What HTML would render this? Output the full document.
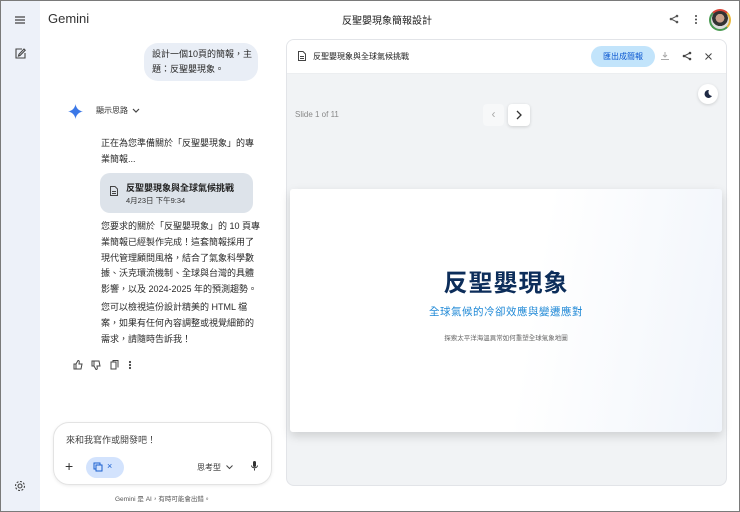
<!DOCTYPE html>
<html><head><meta charset="utf-8"><style>
*{margin:0;padding:0;box-sizing:border-box}
body{width:740px;height:512px;overflow:hidden;font-family:"Liberation Sans","Noto Sans CJK TC",sans-serif;background:#fff;position:relative;color:#1f1f1f}
.frame{position:absolute;inset:0;border:1px solid #7a7a7a;pointer-events:none;z-index:10}
.side{position:absolute;left:0;top:0;width:40px;height:512px;background:#edf1f9}
.abs{position:absolute}
.t{font-size:9px;line-height:15.8px;color:#2a2a2a}
</style></head><body>
<div class="frame"></div>
<div class="side"></div>
<svg class="abs" style="left:15px;top:16px" width="10" height="8"><path d="M0 1h10M0 4h10M0 7h10" stroke="#444" stroke-width="1.2"/></svg>
<svg class="abs" style="left:15px;top:48px" width="11" height="11"><path d="M9 1l1.2 1.2L5 7.5 3.5 8 4 6.3z M7 1H1v9h9V5" stroke="#444" fill="none" stroke-width="1.1"/></svg>
<svg class="abs" style="left:14px;top:480px" width="12" height="12"><circle cx="6" cy="6" r="2" fill="none" stroke="#444" stroke-width="1.1"/><circle cx="6" cy="6" r="4.5" fill="none" stroke="#444" stroke-width="1.1" stroke-dasharray="2 1.5"/></svg>

<div class="abs" style="left:48px;top:11px;font-size:13px;color:#333">Gemini</div>
<div class="abs" style="left:342px;top:12px;font-size:10px;color:#222">反聖嬰現象簡報設計</div>
<svg class="abs" style="left:669px;top:14px" width="10" height="10"><circle cx="8" cy="2" r="1.3" fill="#555"/><circle cx="2" cy="5" r="1.3" fill="#555"/><circle cx="8" cy="8" r="1.3" fill="#555"/><path d="M8 2L2 5l6 3" stroke="#555" fill="none"/></svg>
<svg class="abs" style="left:694px;top:14px" width="4" height="11"><circle cx="2" cy="2" r="1" fill="#444"/><circle cx="2" cy="5.5" r="1" fill="#444"/><circle cx="2" cy="9" r="1" fill="#444"/></svg>
<div class="abs" style="left:709px;top:9px;width:22px;height:22px;border-radius:50%;border:2px solid #4a9a52;border-top-color:#d94436;border-right-color:#e9b93a;background:radial-gradient(circle at 50% 40%,#c9a08a 0 30%,#333 32% 55%,#ddd 57%)"></div>

<div class="abs t" style="left:144px;top:43px;width:114px;height:38px;background:#e9eef6;border-radius:14px;padding:4px 5px 4px 8px;font-size:9px;line-height:15px;white-space:nowrap">設計一個10頁的簡報，主<br>題：反聖嬰現象。</div>

<svg class="abs" style="left:68px;top:104px" width="15" height="15"><path d="M7.5 0C8 4 11 7 15 7.5 11 8 8 11 7.5 15 7 11 4 8 0 7.5 4 7 7 4 7.5 0z" fill="#3b78e7"/></svg>
<div class="abs" style="left:96px;top:105px;font-size:8px;color:#333">顯示思路</div>
<svg class="abs" style="left:132px;top:108px" width="8" height="6"><path d="M1 1l3 3 3-3" stroke="#444" fill="none" stroke-width="1.2"/></svg>

<div class="abs t" style="left:101px;top:136px;width:160px;white-space:nowrap">正在為您準備關於「反聖嬰現象」的專<br>業簡報...</div>
<div class="abs" style="left:100px;top:173px;width:153px;height:40px;background:#dde3ea;border-radius:10px"></div>
<svg class="abs" style="left:110px;top:186px" width="8" height="10"><path d="M.5.5h4.5l2.5 2.5v6.5h-7z M2 5.5h4M2 7.5h4" stroke="#444" fill="none" stroke-width="1"/></svg>
<div class="abs" style="left:126px;top:181px;font-size:9px;font-weight:bold;color:#222">反聖嬰現象與全球氣候挑戰</div>
<div class="abs" style="left:126px;top:195px;font-size:7.5px;color:#333">4月23日 下午9:34</div>

<div class="abs t" style="left:101px;top:219px;width:170px;white-space:nowrap">您要求的關於「反聖嬰現象」的 10 頁專<br>業簡報已經製作完成！這套簡報採用了<br>現代管理顧問風格，結合了氣象科學數<br>據、沃克環流機制、全球與台灣的具體<br>影響，以及 2024-2025 年的預測趨勢。</div>
<div class="abs t" style="left:101px;top:300px;width:170px;white-space:nowrap">您可以檢視這份設計精美的 HTML 檔<br>案，如果有任何內容調整或視覺細節的<br>需求，請隨時告訴我！</div>

<svg class="abs" style="left:73px;top:360px" width="65" height="10" fill="none" stroke="#444" stroke-width="1"><path d="M1 4h2v5H1z M3 4l2-3.5c1 0 1.5.5 1.2 2L6 4h3l-1 5H3"/><path d="M19 6h2V1h-2z M21 6l2 3.5c1 0 1.5-.5 1.2-2L24 6h3l-1-5H21"/><path d="M38 2h5v7h-5z M40 2V.5h5v7"/><circle cx="57" cy="2" r=".6" fill="#444"/><circle cx="57" cy="5" r=".6" fill="#444"/><circle cx="57" cy="8" r=".6" fill="#444"/></svg>

<div class="abs" style="left:53px;top:422px;width:219px;height:63px;border:1px solid #e3e3e3;border-radius:16px;box-shadow:0 1px 3px rgba(0,0,0,.08)"></div>
<div class="abs" style="left:66px;top:433px;font-size:9px;color:#444">來和我寫作或開發吧！</div>
<div class="abs" style="left:65px;top:459px;font-size:14px;color:#333;line-height:14px">+</div>
<div class="abs" style="left:86px;top:457px;width:38px;height:21px;background:#d3e3fd;border-radius:11px"></div>
<svg class="abs" style="left:93px;top:462px" width="10" height="10"><rect x="1" y="1" width="6" height="6" stroke="#1a5fd0" fill="none"/><rect x="3" y="3" width="6" height="6" stroke="#1a5fd0" fill="#d3e3fd"/></svg>
<div class="abs" style="left:107px;top:461px;font-size:9px;color:#1a5fd0">×</div>
<div class="abs" style="left:197px;top:462px;font-size:8px;color:#333">思考型</div>
<svg class="abs" style="left:226px;top:465px" width="7" height="5"><path d="M.5.5l3 3 3-3" stroke="#444" fill="none"/></svg>
<svg class="abs" style="left:251px;top:461px" width="7" height="10"><rect x="2" y="0" width="3" height="6" rx="1.5" fill="#333"/><path d="M.5 4.5c0 3 6 3 6 0M3.5 7.5v2" stroke="#333" fill="none"/></svg>
<div class="abs" style="left:115px;top:493px;font-size:6.5px;color:#555">Gemini 是 AI，有時可能會出錯。</div>

<div class="abs" style="left:286px;top:39px;width:441px;height:447px;border:1px solid #e2e4e8;border-radius:8px;background:#f1f3f5;overflow:hidden">
 <div style="height:34px;background:#fff;border-bottom:1px solid #eceef0"></div>
</div>
<svg class="abs" style="left:298px;top:51px" width="8" height="10"><path d="M.5.5h4.5l2.5 2.5v6.5h-7z M2 5.5h4M2 7.5h4" stroke="#444" fill="none" stroke-width="1"/></svg>
<div class="abs" style="left:313px;top:51px;font-size:8px;color:#222">反聖嬰現象與全球氣候挑戰</div>
<div class="abs" style="left:591px;top:46px;width:64px;height:21px;background:#c2e4fb;border-radius:11px;font-size:8px;color:#0b57d0;text-align:center;line-height:21px">匯出成簡報</div>
<svg class="abs" style="left:661px;top:52px" width="8" height="8"><path d="M4 0v5M2 3l2 2 2-2M0 7.5h8" stroke="#aaa" fill="none"/></svg>
<svg class="abs" style="left:682px;top:51px" width="10" height="10"><circle cx="8" cy="2" r="1.3" fill="#444"/><circle cx="2" cy="5" r="1.3" fill="#444"/><circle cx="8" cy="8" r="1.3" fill="#444"/><path d="M8 2L2 5l6 3" stroke="#444" fill="none"/></svg>
<svg class="abs" style="left:705px;top:53px" width="7" height="7"><path d="M.5.5l6 6M6.5.5l-6 6" stroke="#444"/></svg>

<div class="abs" style="left:698px;top:84px;width:20px;height:20px;border-radius:50%;background:#fff;box-shadow:0 1px 3px rgba(0,0,0,.15)"></div>
<svg class="abs" style="left:703px;top:89px" width="10" height="10"><path d="M6 1a4 4 0 1 0 3 6 4 4 0 0 1-3-6z" fill="#1f2a44"/></svg>
<div class="abs" style="left:295px;top:110px;font-size:8px;color:#888">Slide 1 of 11</div>
<div class="abs" style="left:483px;top:104px;width:21px;height:22px;background:#f7f8f9;border-radius:4px;color:#aaa;font-size:12px;text-align:center;line-height:21px">‹</div>
<div class="abs" style="left:508px;top:104px;width:22px;height:22px;background:#fff;border-radius:4px;box-shadow:0 1px 3px rgba(0,0,0,.15)"></div>
<svg class="abs" style="left:516px;top:110px" width="6" height="10"><path d="M1 1l4 4-4 4" stroke="#333" fill="none" stroke-width="1.3"/></svg>

<div class="abs" style="left:290px;top:189px;width:432px;height:243px;background:linear-gradient(100deg,#fff 55%,#f1f5fb);border-radius:3px;box-shadow:0 4px 10px rgba(0,0,0,.15)"></div>
<div class="abs" style="left:290px;top:268px;width:432px;text-align:center;font-size:24px;font-weight:bold;color:#0c2d5a;line-height:32px;letter-spacing:1px">反聖嬰現象</div>
<div class="abs" style="left:290px;top:304px;width:432px;text-align:center;font-size:10.5px;color:#1e88d6;letter-spacing:.5px">全球氣候的冷卻效應與變遷應對</div>
<div class="abs" style="left:290px;top:332px;width:432px;text-align:center;font-size:6.5px;color:#666">探索太平洋海溫異常如何重塑全球氣象地圖</div>
</body></html>
